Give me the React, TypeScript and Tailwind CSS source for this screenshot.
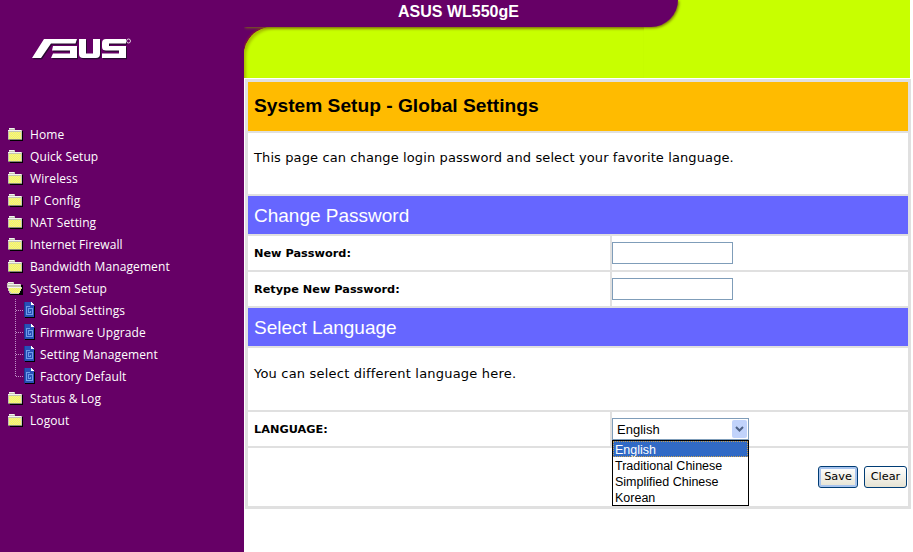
import React from "react";

function Checker({ id }: { id: string }) {
  return (
    <pattern id={id} width="2" height="2" patternUnits="userSpaceOnUse">
      <rect width="2" height="2" fill="#ffff50" />
      <rect width="1" height="1" fill="#e8e8a0" />
      <rect x="1" y="1" width="1" height="1" fill="#e8e8a0" />
    </pattern>
  );
}

function FolderClosed({ id }: { id: string }) {
  return (
    <svg width="15" height="13" viewBox="0 0 15 13" shapeRendering="crispEdges" className="shrink-0">
      <defs><Checker id={id} /></defs>
      <path d="M2 3h13v10H2z" fill="#000" />
      <path d="M0 2h1V0h6v2h7v10H0z" fill="#c4c4b4" />
      <path d="M1 0h5v1H1zM0 2h13v1H0z" fill="#f4f4f0" />
      <rect x="1" y="4" width="12" height="7" fill={`url(#${id})`} />
      <path d="M0 11h14v1H0z" fill="#8a8a7a" />
    </svg>
  );
}

function FolderOpen({ id }: { id: string }) {
  return (
    <svg width="16" height="13" viewBox="0 0 16 13" shapeRendering="crispEdges" className="shrink-0">
      <defs><Checker id={id} /></defs>
      <path d="M3 3h13v10H3z" fill="#000" />
      <path d="M1 0h6v2h7v3h1v1l-3 6H3L0 5V1h1z" fill="#c4c4b4" />
      <path d="M1 0h5v1H1zM1 2h12v1H1z" fill="#f4f4f0" />
      <path d="M2 6h11l1 1-2 4H4L2 8z" fill={`url(#${id})`} />
      <path d="M1 5h13v1H1z" fill="#f4f4f0" />
    </svg>
  );
}

function DocIcon() {
  return (
    <svg width="11" height="16" viewBox="0 0 11 16" shapeRendering="crispEdges" className="shrink-0">
      <path d="M10 4h1v12H1v-1h9z" fill="#000" />
      <path d="M0 0h7l3 3v12H0z" fill="#2850b8" />
      <path d="M7 0h1v1h1v1h1v1H7z" fill="#ffffff" />
      <path d="M0 0h1v15H0z" fill="#1a3a90" />
      <path d="M2 4h4v1H3v7h5V7H5v3h1V9h1v2H4V6h5v7H2z" fill="#6f9be8" />
    </svg>
  );
}

function Connector({ last }: { last?: boolean }) {
  return (
    <svg width="9" height="22" viewBox="0 0 9 22" shapeRendering="crispEdges" className="shrink-0">
      <path d={last ? "M0.5 0V11" : "M0.5 0V22"} stroke="#c090c8" strokeDasharray="1 1" fill="none" />
      <path d="M1 11.5H9" stroke="#c090c8" strokeDasharray="1 1" fill="none" />
    </svg>
  );
}

function LogoShapes({ fill }: { fill: string }) {
  return (
    <g fill={fill}>
      <path d="M2 22 14 3H47L45.5 7.5H21L11 22Z" />
      <path d="M23 10H47V22H21L23 17.5H40V14.5H22Z" />
      <path d="M49 3H56V17.5H63V3H70V18Q70 22 66 22H53Q49 22 49 18Z" />
      <path d="M76 3H96V7.5H79V10H96V22H72V17.5H89V14.5H76Q72 14.5 72 11V7Q72 3 76 3Z" />
    </g>
  );
}

function AsusLogo() {
  return (
    <svg width="102" height="26" viewBox="0 0 102 26">
      <g transform="translate(1 1.2)"><LogoShapes fill="#2a0a30" /></g>
      <LogoShapes fill="#ffffff" />
      <circle cx="98.5" cy="5" r="2" fill="none" stroke="#e8d8e8" strokeWidth="0.9" />
    </svg>
  );
}

const top1 = ["Home", "Quick Setup", "Wireless", "IP Config", "NAT Setting", "Internet Firewall", "Bandwidth Management"];
const subs = ["Global Settings", "Firmware Upgrade", "Setting Management", "Factory Default"];

function MenuRow({ label, id }: { label: string; id: string }) {
  return (
    <div className="flex h-[22px] items-center pl-[8px]">
      <FolderClosed id={id} />
      <span className="ml-[7px] pt-[2px]">{label}</span>
    </div>
  );
}

function Sidebar() {
  return (
    <aside className="w-[244px] shrink-0 bg-[#660066] text-white text-[12px] tracking-[0.1px] font-['Open_Sans',sans-serif]">
      <div className="pl-[30px] pt-[36px]">
        <AsusLogo />
      </div>
      <nav className="mt-[61px]">
        {top1.map((m, i) => (
          <MenuRow key={m} label={m} id={`fc${i}`} />
        ))}
        <div className="flex h-[22px] items-center pl-[7px]">
          <FolderOpen id="fo" />
          <span className="ml-[7px] pt-[2px]">System Setup</span>
        </div>
        {subs.map((s, i) => (
          <div key={s} className="flex h-[22px] items-center pl-[15px]">
            <Connector last={i === subs.length - 1} />
            <DocIcon />
            <span className="ml-[5px] pt-[2px]">{s}</span>
          </div>
        ))}
        <MenuRow label="Status & Log" id="fc8" />
        <MenuRow label="Logout" id="fc9" />
      </nav>
    </aside>
  );
}

function Banner() {
  return (
    <header className="h-[78px] w-[666px] bg-[#660066] flex flex-col overflow-hidden">
      <div className="h-[27px] bg-[#c8ff00] flex">
        <div className="w-[434px] h-full bg-[#660066] rounded-br-[32px] shadow-[1px_1px_3px_#7a6a10] relative z-10 flex items-center justify-center pb-[3px] pr-[5px] text-white font-bold text-[16px] font-['Liberation_Sans',sans-serif]">
          ASUS WL550gE
        </div>
      </div>
      <div className="flex-1 flex">
        <div className="w-[400px] bg-[#c8ff00] rounded-tl-[28px] shadow-[-1px_-1px_2px_#8a1c30,inset_2px_2px_3px_#a8c000]" />
        <div className="flex-1 bg-[#c8ff00]" />
      </div>
    </header>
  );
}

function SectionHead({ children }: { children: React.ReactNode }) {
  return (
    <div className="h-[38px] bg-[#6666ff] text-white flex items-center pl-[6px] pt-[2px] text-[19px] font-['Liberation_Sans',sans-serif]">
      {children}
    </div>
  );
}

function FieldRow({ label, children }: { label: string; children?: React.ReactNode }) {
  return (
    <div className="h-[34px] flex gap-[2px]">
      <div className="w-[362px] bg-white flex items-center pl-[6px] pt-[2px] font-bold text-[11.3px] text-black font-['DejaVu_Sans',sans-serif]">
        {label}
      </div>
      <div className="flex-1 bg-white flex items-center">{children}</div>
    </div>
  );
}

function TextInput() {
  return <div className="w-[121px] h-[22px] bg-white border-[1px] border-[#7f9db9]" />;
}

function LanguageSelect() {
  const items = ["English", "Traditional Chinese", "Simplified Chinese", "Korean"];
  return (
    <div className="relative w-[137px] h-[22px] bg-white border border-[#7f9db9] flex items-center justify-between pl-[4px] pr-[1px] text-[13px] text-black font-['Liberation_Sans',sans-serif]">
      <span className="pt-[2px]">English</span>
      <span className="w-[15px] h-[18px] rounded-[2px] bg-[#c1d3fb] flex items-center justify-center">
        <svg width="9" height="6" viewBox="0 0 9 6">
          <path d="M1 1l3.5 3.5L8 1" fill="none" stroke="#4d6185" strokeWidth="2" />
        </svg>
      </span>
      <div className="absolute left-[-1px] top-[21px] w-[137px] h-[66px] bg-white border border-black z-10 text-[12.5px] leading-[18px]">
        {items.map((it, i) => (
          <div
            key={it}
            className={
              i === 0
                ? "h-[16px] pl-[2px] bg-[#316ac5] text-white outline-1 -outline-offset-1 outline-dotted outline-[#c9a050]"
                : "h-[16px] pl-[2px]"
            }
          >
            {it}
          </div>
        ))}
      </div>
    </div>
  );
}

function Btn({ label, focus, w }: { label: string; focus?: boolean; w: string }) {
  return (
    <button
      className={`${w} h-[22px] rounded-[3px] border border-[#003c74] bg-gradient-to-b from-white to-[#e6e3d3] text-[11.3px] text-black font-['DejaVu_Sans',sans-serif] ${
        focus ? "shadow-[inset_0_0_0_2px_#a8c4ee]" : ""
      }`}
    >
      {label}
    </button>
  );
}

function Panel() {
  return (
    <section className="ml-[1px] mt-[1px] w-[666px] bg-[#e0e0e0] p-[3px] flex flex-col gap-[2px]">
      <div className="h-[49px] bg-[#ffbb00] flex items-center pl-[6px] font-bold text-[19.2px] text-black font-['Liberation_Sans',sans-serif]">
        System Setup - Global Settings
      </div>
      <div className="h-[61px] bg-white flex items-center pl-[6px] pb-[12px] text-[13px] tracking-[0.11px] text-black font-['DejaVu_Sans',sans-serif]">
        This page can change login password and select your favorite language.
      </div>
      <SectionHead>Change Password</SectionHead>
      <FieldRow label="New Password:"><TextInput /></FieldRow>
      <FieldRow label="Retype New Password:"><TextInput /></FieldRow>
      <SectionHead>Select Language</SectionHead>
      <div className="h-[62px] bg-white flex items-center pl-[6px] pb-[11px] text-[13px] tracking-[0.2px] text-black font-['DejaVu_Sans',sans-serif]">
        You can select different language here.
      </div>
      <FieldRow label="LANGUAGE:"><LanguageSelect /></FieldRow>
      <div className="h-[58px] bg-white flex items-end justify-end gap-[6px] pb-[18px] pr-[1px]">
        <Btn label="Save" focus w="w-[40px]" />
        <Btn label="Clear" w="w-[43px]" />
      </div>
    </section>
  );
}

export default function App() {
  return (
    <div className="flex h-[552px] w-[913px] overflow-hidden bg-white">
      <Sidebar />
      <main className="flex-1 min-w-0">
        <Banner />
        <Panel />
      </main>
    </div>
  );
}
